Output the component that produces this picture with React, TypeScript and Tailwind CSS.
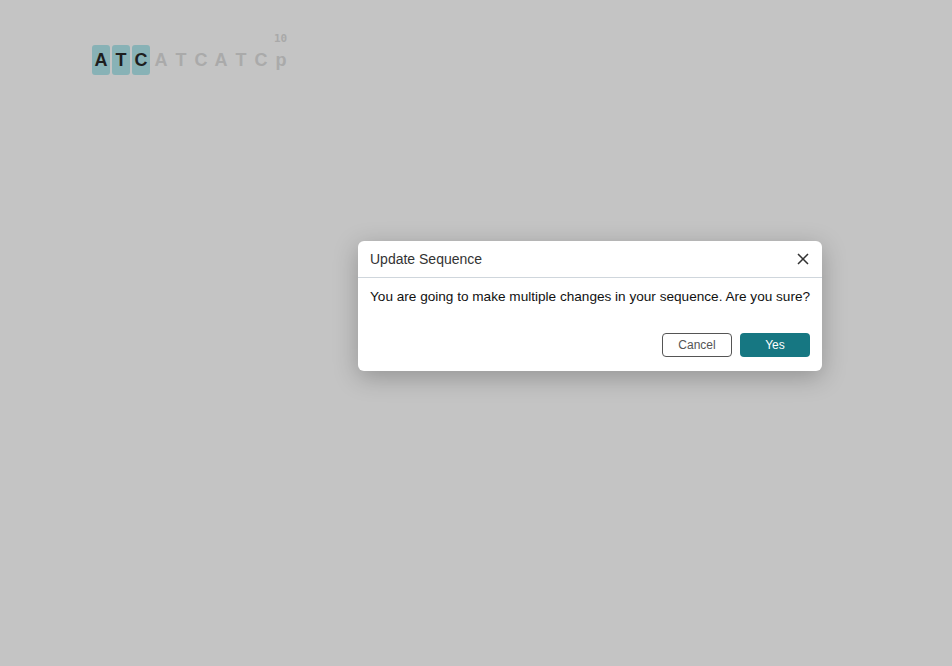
import React from "react";

const seq = "ATCATCATCp".split("");

export default function App() {
  return (
    <div className="w-[952px] h-[666px] bg-[#c4c4c4] relative overflow-hidden" style={{ fontFamily: '"Liberation Sans", Arial, sans-serif' }}>
      <div className="absolute left-[92px] top-[32px]">
        <div className="relative h-[13px]">
          <span className="absolute left-[182px] top-0 text-[11px] font-bold text-[#a9a9a9] leading-[13px]" style={{ fontFamily: '"DejaVu Sans Mono", monospace' }}>10</span>
        </div>
        <div className="flex gap-[2px] mt-0">
          {seq.map((c, i) => (
            <div
              key={i}
              className={`w-[18px] h-[30px] rounded-[3px] flex items-center justify-center text-[18px] leading-none font-bold ${i < 3 ? "bg-[#88b2b6] text-[#1e1e1e]" : "text-[#aaaaaa]"}`}
            >
              {c}
            </div>
          ))}
        </div>
      </div>

      <div className="absolute left-[358px] top-[241px] w-[464px] h-[130px] bg-white rounded-[6px] shadow-[0_6px_24px_rgba(0,0,0,0.25)] flex flex-col">
        <div className="h-[37px] border-b border-[#cfd6dc] flex items-center justify-between pl-[12px] pr-[12px]">
          <span className="text-[14px] text-[#333333]">Update Sequence</span>
          <svg width="12" height="12" viewBox="0 0 12 12" className="mr-[1px]">
            <path d="M1 1 L11 11 M11 1 L1 11" stroke="#333" strokeWidth="1.5" />
          </svg>
        </div>
        <div className="px-[12px] pt-[11px] text-[13.6px] text-[#111111] leading-[16px] whitespace-nowrap">
          You are going to make multiple changes in your sequence. Are you sure?
        </div>
        <div className="flex-1" />
        <div className="flex justify-end gap-[8px] pr-[12px] pb-[14px]">
          <button className="w-[70px] h-[24px] rounded-[4px] border border-[#555555] bg-white text-[12px] text-[#555555]">Cancel</button>
          <button className="w-[70px] h-[24px] rounded-[4px] bg-[#167782] text-[12px] text-white">Yes</button>
        </div>
      </div>
    </div>
  );
}
